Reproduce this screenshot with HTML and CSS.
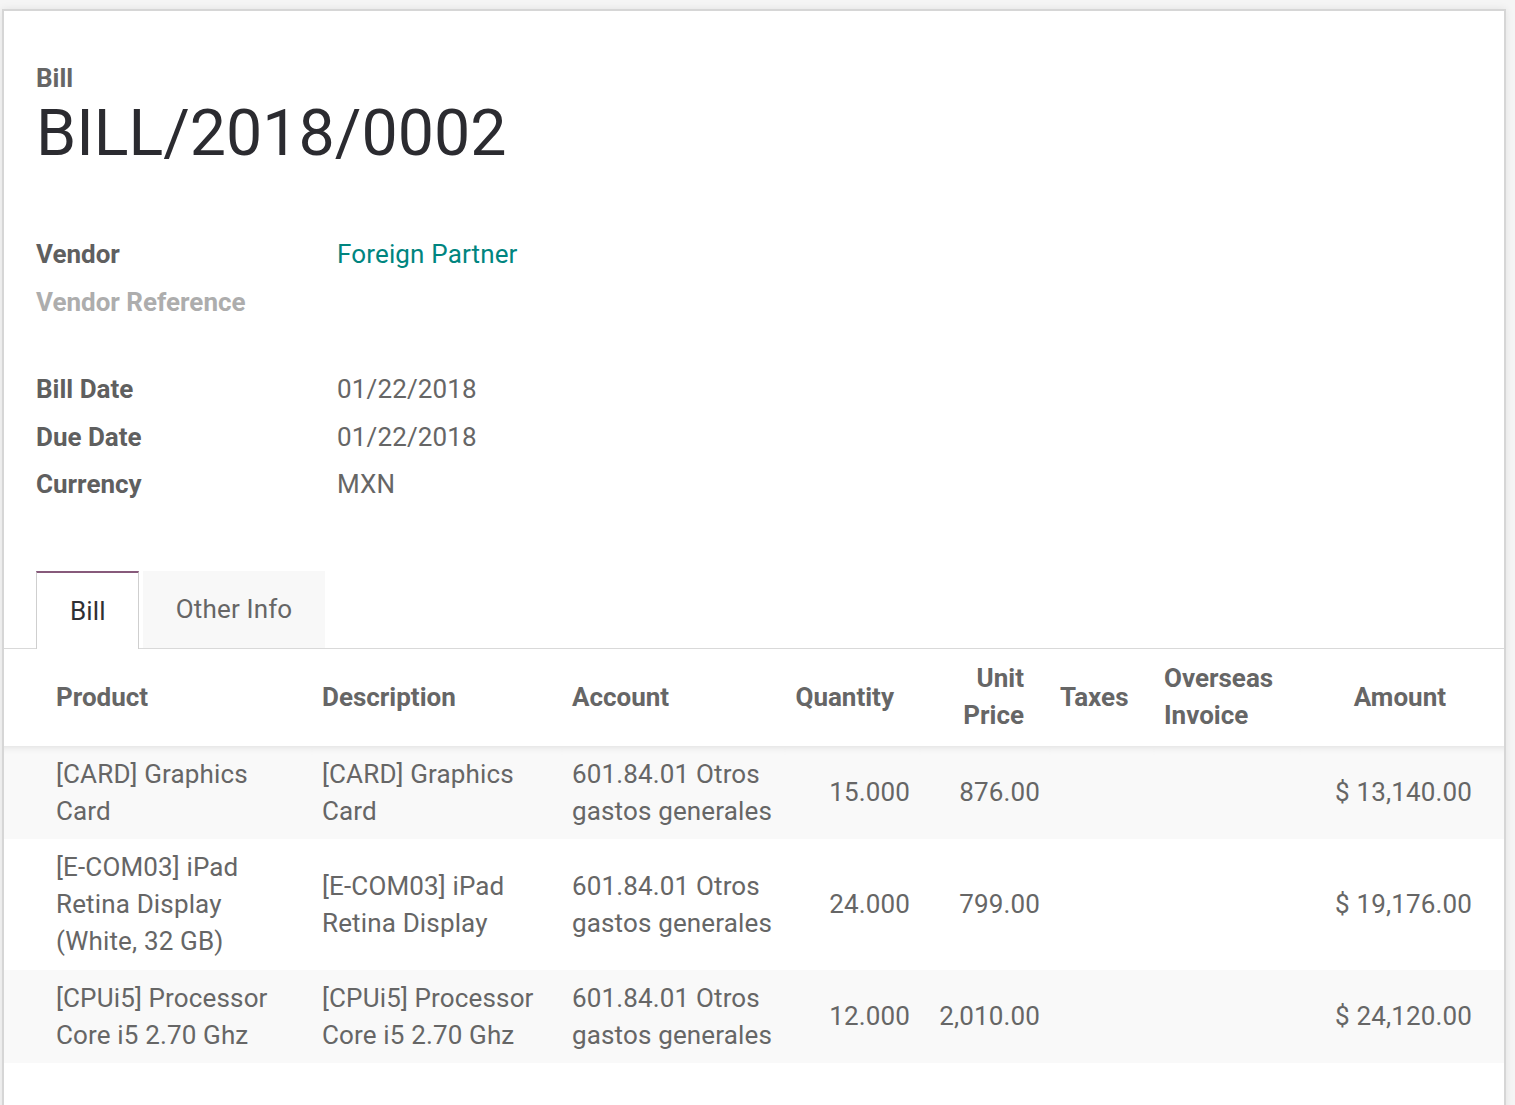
FILE: index.html
```html
<!DOCTYPE html>
<html lang="en">
<head>
<meta charset="utf-8">
<title>BILL/2018/0002</title>
<link rel="stylesheet" href="styles.css">
</head>
<body>
<div class="sheet">
  <div class="title-block">
    <div class="doc-type">Bill</div>
    <h1 class="doc-name">BILL/2018/0002</h1>
  </div>

  <div class="group">
    <div class="field"><div class="label">Vendor</div><div class="value link">Foreign Partner</div></div>
    <div class="field"><div class="label muted">Vendor Reference</div><div class="value"></div></div>
  </div>

  <div class="group group-second">
    <div class="field"><div class="label">Bill Date</div><div class="value">01/22/2018</div></div>
    <div class="field"><div class="label">Due Date</div><div class="value">01/22/2018</div></div>
    <div class="field"><div class="label">Currency</div><div class="value">MXN</div></div>
  </div>

  <div class="tabs">
    <div class="tab active">Bill</div>
    <div class="tab">Other Info</div>
  </div>

  <div class="lines">
    <table class="list">
      <colgroup>
        <col class="c-product"><col class="c-desc"><col class="c-account"><col class="c-qty">
        <col class="c-price"><col class="c-taxes"><col class="c-overseas"><col class="c-amount">
      </colgroup>
      <thead>
        <tr>
          <th class="col-product">Product</th>
          <th class="col-desc">Description</th>
          <th class="col-account">Account</th>
          <th class="col-qty num nowrap">Quantity</th>
          <th class="col-price num">Unit Price</th>
          <th class="col-taxes">Taxes</th>
          <th class="col-overseas">Overseas Invoice</th>
          <th class="col-amount num">Amount</th>
        </tr>
      </thead>
      <tbody>
        <tr class="first">
          <td class="col-product">[CARD] Graphics Card</td>
          <td class="col-desc">[CARD] Graphics Card</td>
          <td class="col-account">601.84.01 Otros gastos generales</td>
          <td class="col-qty num">15.000</td>
          <td class="col-price num">876.00</td>
          <td class="col-taxes"></td>
          <td class="col-overseas"></td>
          <td class="col-amount num">$&nbsp;13,140.00</td>
        </tr>
        <tr>
          <td class="col-product">[E-COM03] iPad Retina Display (White, 32 GB)</td>
          <td class="col-desc">[E-COM03] iPad Retina Display</td>
          <td class="col-account">601.84.01 Otros gastos generales</td>
          <td class="col-qty num">24.000</td>
          <td class="col-price num">799.00</td>
          <td class="col-taxes"></td>
          <td class="col-overseas"></td>
          <td class="col-amount num">$&nbsp;19,176.00</td>
        </tr>
        <tr>
          <td class="col-product">[CPUi5] Processor Core i5 2.70 Ghz</td>
          <td class="col-desc">[CPUi5] Processor Core i5 2.70 Ghz</td>
          <td class="col-account">601.84.01 Otros gastos generales</td>
          <td class="col-qty num">12.000</td>
          <td class="col-price num">2,010.00</td>
          <td class="col-taxes"></td>
          <td class="col-overseas"></td>
          <td class="col-amount num">$&nbsp;24,120.00</td>
        </tr>
      </tbody>
    </table>
  </div>
</div>
</body>
</html>
```
FILE: styles.css
```css
html, body {
  margin: 0;
  padding: 0;
}
body {
  background: #f5f5f5;
  font-family: Roboto, "Liberation Sans", Arial, sans-serif;
  font-size: 26px;
  letter-spacing: 0.15px;
  line-height: 37px;
  color: #666666;
  overflow: hidden;
}
.sheet {
  box-sizing: border-box;
  margin: 9px 0 0 2px;
  width: 1504px;
  min-height: 1200px;
  background: #ffffff;
  border: 2px solid #d6d6d6;
  box-shadow: 0 0 8px rgba(0, 0, 0, 0.08);
  padding: 49px 32px 0 32px;
}
.title-block {
  margin-bottom: 61px;
}
.doc-type {
  font-weight: 700;
  letter-spacing: 0;
  color: #666666;
  line-height: 37px;
}
.doc-name {
  margin: 0;
  font-size: 64.5px;
  letter-spacing: 0;
  line-height: 73px;
  font-weight: 400;
  color: #2b2b30;
}
.group-second {
  margin-top: 40px;
}
.field {
  display: flex;
  padding: 5.25px 0;
  line-height: 37px;
  min-height: 37px;
}
.label {
  width: 301px;
  flex: none;
  font-weight: 700;
  letter-spacing: 0;
  color: #5f5f5f;
}
.label.muted {
  color: #adadad;
}
.value {
  color: #666666;
}
.value.link {
  color: #00857f;
}
.tabs {
  display: flex;
  align-items: flex-end;
  margin: 62px -32px 0 -32px;
  padding-left: 32px;
  border-bottom: 1px solid #d9d9d9;
}
.tab {
  padding: 20px 33px;
  line-height: 37px;
  background: #f8f8f8;
  color: #666666;
  margin-left: 4px;
}
.tab.active {
  margin-left: 0;
  background: #ffffff;
  color: #2f2f33;
  border-top: 2px solid #875a7b;
  border-left: 1px solid #cfcfcf;
  border-right: 1px solid #cfcfcf;
  padding: 20px 32px 19px 33px;
  margin-bottom: -1px;
}
.lines {
  margin: 0 -32px;
}
.list {
  width: 1500px;
  table-layout: fixed;
  border-collapse: collapse;
  border-spacing: 0;
}
.c-product { width: 308px; }
.c-desc { width: 250px; }
.c-account { width: 223px; }
.c-qty { width: 135px; }
.c-price { width: 130px; }
.c-taxes { width: 104px; }
.c-overseas { width: 146px; }
.c-amount { width: 204px; }

.list th, .list td {
  text-align: left;
  vertical-align: middle;
  line-height: 37px;
  padding-left: 10px;
  padding-right: 10px;
}
.list th {
  font-weight: 700;
  letter-spacing: 0;
  color: #666666;
  padding-top: 11.5px;
  padding-bottom: 11.5px;
}
.list td {
  padding-top: 10px;
  padding-bottom: 9.5px;
  color: #666666;
}
.list .num {
  text-align: right;
}
.list .nowrap {
  white-space: nowrap;
}
.list .col-product {
  padding-left: 52px;
}
.list .col-account {
  padding-right: 0;
}
.list th.col-qty,
.list th.col-price {
  padding-right: 26px;
}
.list td.col-amount {
  padding-right: 32px;
}
.list th.col-amount {
  padding-right: 58px;
}
.list tbody tr:nth-child(odd) td {
  background: #f9f9f9;
}
.list tbody tr.first td {
  box-shadow: inset 0 8px 8px -8px rgba(0, 0, 0, 0.14);
}
```
